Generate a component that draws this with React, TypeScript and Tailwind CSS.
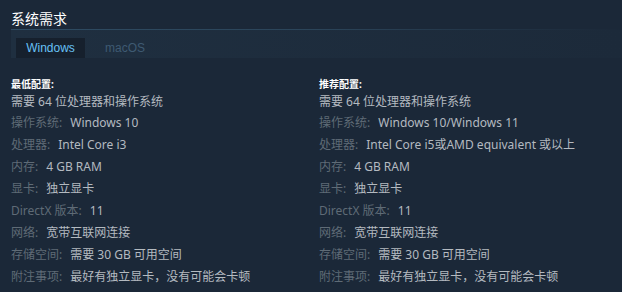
import React from "react";

type Row = { label: string; value: string };

const left: Row[] = [
  { label: "操作系统:", value: "Windows 10" },
  { label: "处理器:", value: "Intel Core i3" },
  { label: "内存:", value: "4 GB RAM" },
  { label: "显卡:", value: "独立显卡" },
  { label: "DirectX 版本:", value: "11" },
  { label: "网络:", value: "宽带互联网连接" },
  { label: "存储空间:", value: "需要 30 GB 可用空间" },
  { label: "附注事项:", value: "最好有独立显卡，没有可能会卡顿" },
];

const right: Row[] = [
  { label: "操作系统:", value: "Windows 10/Windows 11" },
  { label: "处理器:", value: "Intel Core i5或AMD equivalent 或以上" },
  { label: "内存:", value: "4 GB RAM" },
  { label: "显卡:", value: "独立显卡" },
  { label: "DirectX 版本:", value: "11" },
  { label: "网络:", value: "宽带互联网连接" },
  { label: "存储空间:", value: "需要 30 GB 可用空间" },
  { label: "附注事项:", value: "最好有独立显卡，没有可能会卡顿" },
];

function Col({ title, rows, className }: { title: string; rows: Row[]; className?: string }) {
  return (
    <div className={className}>
      <div className="text-[10px] leading-[16px] font-bold text-white">{title}</div>
      <div className="text-[12px] leading-[20px] text-[#b4bac0]">需要 64 位处理器和操作系统</div>
      {rows.map((r) => (
        <div key={r.label} className="text-[12px] leading-[22px] whitespace-nowrap">
          <span className="text-[#5f6b76]">{r.label}</span>
          <span className="ml-[8px] text-[#b4bac0]">{r.value}</span>
        </div>
      ))}
    </div>
  );
}

export default function App() {
  return (
    <div
      className="w-[622px] h-[292px] bg-[#1b2838] overflow-hidden"
      style={{ fontFamily: '"Noto Sans", "Noto Sans CJK SC", Arial, sans-serif' }}
    >
      <div className="pl-[11px] pt-[8px]">
        <div className="text-[14px] leading-[21px] text-white">系统需求</div>
        <div className="h-[1px] bg-gradient-to-r from-[#2e4b62] via-[#2b4459] to-transparent" />
        <div
          className="h-[28px] bg-gradient-to-r from-[#1f2f40] to-[#1c2a3a] flex items-end pl-[5px]"
          style={{ fontFamily: '"Liberation Sans", Arial, sans-serif' }}
        >
          <div className="w-[69px] h-[20px] bg-[#16202d] text-[#67c1f5] text-[12px] leading-[20px] flex items-center justify-center">
            Windows
          </div>
          <div className="ml-[20px] h-[20px] text-[#3e5a72] text-[12px] leading-[20px]">macOS</div>
        </div>
        <div className="flex mt-[18px]">
          <Col title="最低配置:" rows={left} className="w-[308px]" />
          <Col title="推荐配置:" rows={right} />
        </div>
      </div>
    </div>
  );
}
